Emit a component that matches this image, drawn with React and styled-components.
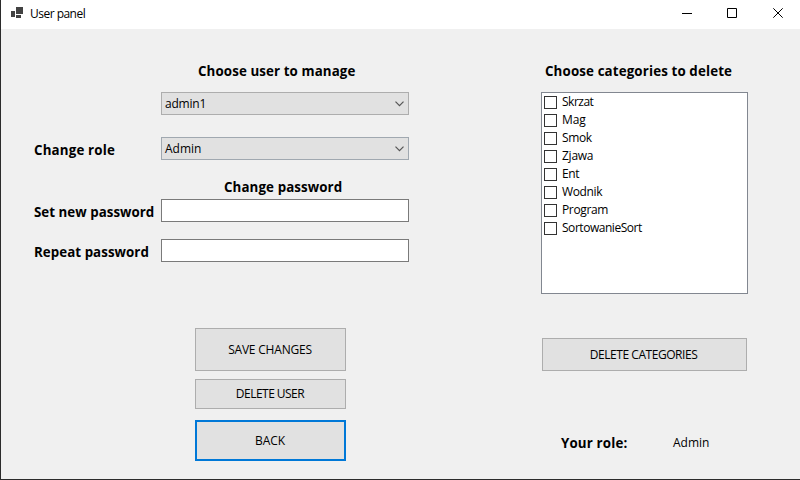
import React from 'react';
import styled, { createGlobalStyle } from 'styled-components';

const GlobalStyle = createGlobalStyle`
  * { box-sizing: border-box; }
  body { margin: 0; overflow: hidden; }
`;

const Window = styled.div`
  display: flex;
  flex-direction: column;
  width: 800px;
  height: 480px;
  border-left: 1px solid #2b2b2b;
  border-bottom: 1px solid #2b2b2b;
  background: #f0f0f0;
  color: #000;
  font: 12px/17px "Open Sans", "Noto Sans", sans-serif;
  white-space: nowrap;
`;

const TitleBar = styled.header`
  display: flex;
  height: 29px;
  flex: none;
  padding-left: 10px;
  background: #fff;
`;

const AppIcon = styled.svg`
  width: 13px;
  height: 12px;
  margin-top: 7px;
`;

const Title = styled.span`
  flex: 1;
  margin: 5px 0 0 6px;
  letter-spacing: -0.52px;
`;

const Controls = styled.div`
  display: flex;
  align-items: flex-start;
  gap: 35px;
  padding: 8px 16px 0 0;
`;

const ControlIcon = styled.svg`
  width: 11px;
  height: 10px;
  overflow: visible;
  fill: none;
  stroke: #000;
`;

const Body = styled.main`
  display: flex;
  gap: 132px;
  padding: 33px 0 0 33px;
`;

const Form = styled.section`
  display: flex;
  flex-direction: column;
  width: 375px;
`;

const Side = styled.section`
  display: flex;
  flex-direction: column;
  width: 207px;
`;

const BoldText = styled.div`
  height: 18px;
  font-size: 13.33px;
  line-height: 18px;
  font-weight: 700;
  letter-spacing: ${(p) => p.$spacing}px;
`;

const Heading = styled(BoldText)`
  margin-top: ${(p) => p.$top || 0}px;
  padding-left: ${(p) => p.$indent}px;
`;

const FieldRow = styled.div`
  display: grid;
  grid-template-columns: 127px 248px;
  margin-top: ${(p) => p.$top}px;
`;

const FieldLabel = styled(BoldText).attrs({ as: 'label' })`
  margin-top: 4px;
  grid-column: 1;
`;

const Combo = styled.div`
  grid-column: 2;
  display: flex;
  justify-content: space-between;
  height: 23px;
  padding: 2px 4px 0 3px;
  border: 1px solid ${(p) => p.$border || '#adadad'};
  background: #e1e1e1;
  letter-spacing: ${(p) => p.$spacing || 0}px;
`;

const Chevron = styled.svg`
  width: 9px;
  height: 6px;
  margin-top: 6px;
  fill: none;
  stroke: #555;
  stroke-width: 1.2;
`;

const PasswordInput = styled.input`
  grid-column: 2;
  width: 248px;
  height: 23px;
  padding: 0 4px;
  border: 1px solid #7a7a7a;
  border-radius: 0;
  background: #fff;
  outline: none;
`;

const Actions = styled.div`
  display: flex;
  flex-direction: column;
  width: 151px;
  margin: 66px 0 0 161px;
`;

const Button = styled.button`
  flex: none;
  height: ${(p) => p.$height}px;
  margin: ${(p) => p.$margin || '0'};
  padding: 0 ${(p) => p.$nudge || 0}px ${(p) => p.$lift || 0}px 0;
  border: ${(p) => (p.$focused ? '2px solid #0078d7' : '1px solid #adadad')};
  border-radius: 0;
  background: #e1e1e1;
  color: #000;
  font: inherit;
  letter-spacing: ${(p) => p.$spacing || 0}px;
`;

const CheckList = styled.ul`
  height: 202px;
  margin: 12px 0 0;
  padding: 0 0 0 2px;
  border: 1px solid #828790;
  background: #fff;
  list-style: none;
`;

const CheckItem = styled.li`
  display: flex;
  gap: 5px;
  height: 18px;
  letter-spacing: ${(p) => p.$spacing}px;
`;

const CheckBox = styled.span`
  width: 13px;
  height: 13px;
  margin-top: 3px;
  border: 1px solid #333;
  background: #fff;
`;

const RoleRow = styled.div`
  display: grid;
  grid-template-columns: 112px auto;
  margin: 63px 0 0 20px;
`;

const categories = [
  ['Skrzat', -0.5],
  ['Mag', -0.15],
  ['Smok', -0.4],
  ['Zjawa', -0.25],
  ['Ent', -0.35],
  ['Wodnik', -0.35],
  ['Program', -0.35],
  ['SortowanieSort', -0.46],
];

const ComboArrow = () => (
  <Chevron viewBox="0 0 9 6">
    <path d="M0.5 0.7 4.5 4.7 8.5 0.7" />
  </Chevron>
);

export default function App() {
  return (
    <Window>
      <GlobalStyle />
      <TitleBar>
        <AppIcon viewBox="0 0 13 12" shapeRendering="crispEdges" fill="#424242">
          <path d="M5 0h7v7H5zM0 4h4v6H0zM5 8h5v3H5z" />
        </AppIcon>
        <Title>User panel</Title>
        <Controls>
          <ControlIcon viewBox="0 0 11 10">
            <path d="M1 5.5h10" />
          </ControlIcon>
          <ControlIcon viewBox="0 0 11 10">
            <path d="M0.5 0.5h9v9h-9z" />
          </ControlIcon>
          <ControlIcon viewBox="0 0 11 10">
            <path d="M0.3 0.3 9.7 9.7M9.7 0.3 0.3 9.7" />
          </ControlIcon>
        </Controls>
      </TitleBar>
      <Body>
        <Form>
          <Heading $indent={164} $spacing={0.1}>Choose user to manage</Heading>
          <FieldRow $top={12}>
            <Combo $spacing={-0.2}>admin1<ComboArrow /></Combo>
          </FieldRow>
          <FieldRow $top={22}>
            <FieldLabel $spacing={0.17}>Change role</FieldLabel>
            <Combo $border="#a0a8b0">Admin<ComboArrow /></Combo>
          </FieldRow>
          <Heading $top={18} $indent={190} $spacing={0.1}>Change password</Heading>
          <FieldRow $top={3}>
            <FieldLabel $spacing={0.03}>Set new password</FieldLabel>
            <PasswordInput type="password" />
          </FieldRow>
          <FieldRow $top={17}>
            <FieldLabel $spacing={0.05}>Repeat password</FieldLabel>
            <PasswordInput type="password" />
          </FieldRow>
          <Actions>
            <Button $height={43} $spacing={-0.2} $nudge={1}>SAVE CHANGES</Button>
            <Button $height={30} $spacing={-0.53} $margin="8px 0 11px" $lift={1} $nudge={1}>DELETE USER</Button>
            <Button $height={41} $focused $nudge={1}>BACK</Button>
          </Actions>
        </Form>
        <Side>
          <Heading $indent={4} $spacing={0.13}>Choose categories to delete</Heading>
          <CheckList>
            {categories.map(([name, spacing]) => (
              <CheckItem key={name} $spacing={spacing}>
                <CheckBox />
                {name}
              </CheckItem>
            ))}
          </CheckList>
          <Button $height={33} $spacing={-0.45} $margin="44px 1px 0" $lift={1} $nudge={2}>DELETE CATEGORIES</Button>
          <RoleRow>
            <BoldText $spacing={0.15}>Your role:</BoldText>
            <span>Admin</span>
          </RoleRow>
        </Side>
      </Body>
    </Window>
  );
}
